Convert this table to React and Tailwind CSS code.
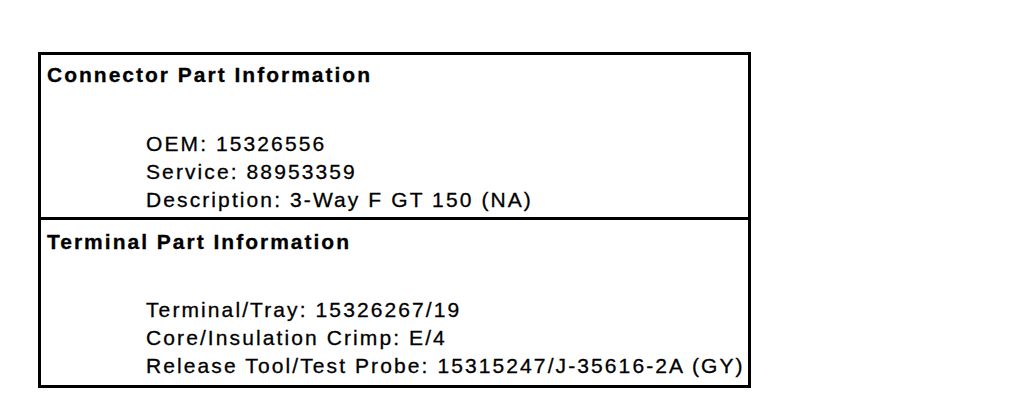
export default function App() {
  const font = { fontFamily: '"Liberation Sans", Arial, sans-serif' };
  return (
    <div className="w-[1024px] h-[408px] bg-white overflow-hidden" style={font}>
      <div className="ml-[38px] mt-[52px] w-[713px] border-[3px] border-black text-black text-[21px] leading-[28px] tracking-[2.1px] [-webkit-text-stroke:0.3px_black]">
        <div className="border-b-[3px] border-black pt-[6px] pb-[3px] pl-[6px]">
          <div className="font-bold h-[28px] tracking-[2px]">Connector Part Information</div>
          <div className="mt-[41px] pl-[99px]">
            <div>OEM: 15326556</div>
            <div>Service: 88953359</div>
            <div>Description: 3-Way F GT 150 (NA)</div>
          </div>
        </div>
        <div className="pt-[8px] pb-[5px] pl-[6px]">
          <div className="font-bold h-[28px] tracking-[2px]">Terminal Part Information</div>
          <div className="mt-[40px] pl-[99px]">
            <div>Terminal/Tray: 15326267/19</div>
            <div>Core/Insulation Crimp: E/4</div>
            <div>Release Tool/Test Probe: 15315247/J-35616-2A (GY)</div>
          </div>
        </div>
      </div>
    </div>
  );
}
